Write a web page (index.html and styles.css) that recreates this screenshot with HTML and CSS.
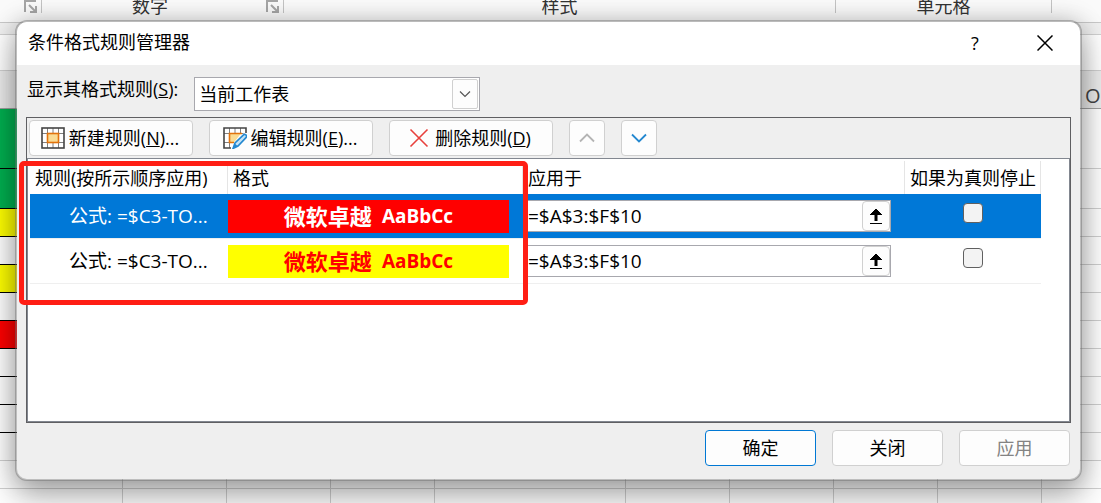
FILE: index.html
```html
<!DOCTYPE html>
<html lang="zh-CN">
<head>
    <meta charset="UTF-8">
    <meta name="viewport" content="width=device-width, initial-scale=1.0">
    <title>条件格式规则管理器</title>
    <link rel="stylesheet" href="styles.css">
</head>
<body>
    <!-- Workbook behind the dialog -->
    <div class="workbook">
        <div class="ribbon">
            <div class="group group-edge">
                <svg class="launcher" viewBox="0 0 13 13"><path d="M1 12V1h11M5 5l6 6M12 6v6H6" /></svg>
            </div>
            <div class="group group-number">
                <span class="group-label">数字</span>
                <svg class="launcher" viewBox="0 0 13 13"><path d="M1 12V1h11M5 5l6 6M12 6v6H6" /></svg>
            </div>
            <div class="group group-style"><span class="group-label">样式</span></div>
            <div class="group group-cells"><span class="group-label">单元格</span></div>
        </div>
        <div class="ribbon-gap"></div>
        <div class="formula-bar"></div>
        <div class="column-header"><span>O</span></div>
        <div class="sheet">
            <div class="row row-title"><div class="cell green"></div></div>
            <div class="row row-head"><div class="cell green"></div></div>
            <div class="row"><div class="cell yellow"></div></div>
            <div class="row"><div class="cell"></div></div>
            <div class="row"><div class="cell yellow"></div></div>
            <div class="row"><div class="cell"></div></div>
            <div class="row"><div class="cell red"></div></div>
            <div class="row"><div class="cell"></div></div>
            <div class="row"><div class="cell"></div></div>
            <div class="row"><div class="cell"></div></div>
            <div class="row"></div>
            <div class="row"></div>
            <div class="row"></div>
        </div>
    </div>

    <div class="dialog" role="dialog" aria-labelledby="dialog-title">
        <div class="title-bar">
            <h1 id="dialog-title">条件格式规则管理器</h1>
            <button class="title-btn" type="button">?</button>
            <button class="title-btn" type="button" aria-label="关闭">
                <svg width="16" height="16" viewBox="0 0 16 16"><path d="M.5.5l15 15M15.5.5l-15 15" fill="none" stroke="#000" stroke-width="1.5" /></svg>
            </button>
        </div>

        <div class="content">
            <div class="scope">
                <label for="scope">显示其格式规则(<u>S</u>):</label>
                <div class="select-box">
                    <select id="scope">
                        <option>当前工作表</option>
                    </select>
                    <span class="select-arrow">
                        <svg width="12" height="7" viewBox="0 0 12 7"><path d="M1 .5l5 5 5-5" fill="none" stroke="#555" stroke-width="1.2" /></svg>
                    </span>
                </div>
            </div>

            <div class="panel">
                <div class="toolbar">
                    <button class="btn tool-btn" type="button">
                        <svg width="24" height="22" viewBox="0 0 24 22">
                            <rect x="1" y="1" width="22" height="20" fill="#fff" />
                            <path d="M6.500 1v20M17.500 1v20M1 6.500h22M1 15.500h22M12 1v5M12 16v5" fill="none" stroke="#808080" />
                            <rect x="1" y="1" width="22" height="20" fill="none" stroke="#444" stroke-width="1.600" />
                            <rect x="6.500" y="6.500" width="11" height="9" fill="#fadc94" stroke="#e3730b" stroke-width="1.600" />
                        </svg>
                        <span>新建规则(<u>N</u>)...</span>
                    </button>
                    <button class="btn tool-btn" type="button">
                        <svg width="24" height="22" viewBox="0 0 24 22">
                            <path d="M1 1h22v5L9 21H1z" fill="#fff" />
                            <path d="M6.500 1v20M12 1v5M17.500 1v5M1 6.500h21M1 15.500h8" fill="none" stroke="#808080" />
                            <path d="M23 6V1H1v20h7" fill="none" stroke="#444" stroke-width="1.600" />
                            <path d="M18 6.500H6.500v9H11z" fill="#fadc94" />
                            <path d="M19 6.500H6.500v9H11" fill="none" stroke="#e3730b" stroke-width="1.600" />
                            <path d="M10 21.500l2-5.500L20.500 7.800c1.500-1.300 4 .8 2.700 2.600L15 19z" fill="#fff" stroke="#fff" stroke-width="2" />
                            <path d="M10 21.500l2-5.500L20.500 7.800c1.500-1.300 4 .8 2.700 2.600L15 19z" fill="#c5e3f6" stroke="#2488d0" stroke-width="1.600" />
                            <path d="M10 21.500l1.800-5 3 2.800z" fill="#2488d0" />
                        </svg>
                        <span>编辑规则(<u>E</u>)...</span>
                    </button>
                    <button class="btn tool-btn" type="button">
                        <svg class="icon-delete" width="20" height="20" viewBox="0 0 20 20"><path d="M1.500 1.500l17 17M18.500 1.500l-17 17" fill="none" stroke="#e8403c" stroke-width="1.600" /></svg>
                        <span>删除规则(<u>D</u>)</span>
                    </button>
                    <button class="btn move-btn" type="button" aria-label="上移" disabled>
                        <svg width="16" height="10" viewBox="0 0 16 10"><path d="M1 8.500l7-7 7 7" fill="none" stroke="#b4b4b4" stroke-width="1.800" /></svg>
                    </button>
                    <button class="btn move-btn" type="button" aria-label="下移">
                        <svg width="16" height="10" viewBox="0 0 16 10"><path d="M1 1.500l7 7 7-7" fill="none" stroke="#2488d0" stroke-width="1.800" /></svg>
                    </button>
                </div>

                <div class="list">
                    <table class="rules">
                        <colgroup>
                            <col class="col-rule">
                            <col class="col-format">
                            <col class="col-range">
                            <col class="col-stop">
                        </colgroup>
                        <thead>
                            <tr>
                                <th>规则(按所示顺序应用)</th>
                                <th>格式</th>
                                <th>应用于</th>
                                <th>如果为真则停止</th>
                            </tr>
                        </thead>
                        <tbody>
                            <tr class="selected">
                                <td class="rule-name">公式: =$C3-TO...</td>
                                <td><div class="preview preview-red"><span>微软卓越</span><span class="latin">AaBbCc</span></div></td>
                                <td>
                                    <div class="range">
                                        <input type="text" value="=$A$3:$F$10" aria-label="应用于">
                                        <button class="range-btn" type="button" aria-label="选择区域">
                                            <svg width="12" height="15" viewBox="0 0 12 15"><path d="M5 0h2v1h1v1h1v1h1v1h1v1h1v1H7.500v6h-3V6H0V5h1V4h1V3h1V2h1V1h1zM0 14h12v1H0z" /></svg>
                                        </button>
                                    </div>
                                </td>
                                <td class="stop"><input type="checkbox" aria-label="如果为真则停止"></td>
                            </tr>
                            <tr>
                                <td class="rule-name">公式: =$C3-TO...</td>
                                <td><div class="preview preview-yellow"><span>微软卓越</span><span class="latin">AaBbCc</span></div></td>
                                <td>
                                    <div class="range">
                                        <input type="text" value="=$A$3:$F$10" aria-label="应用于">
                                        <button class="range-btn" type="button" aria-label="选择区域">
                                            <svg width="12" height="15" viewBox="0 0 12 15"><path d="M5 0h2v1h1v1h1v1h1v1h1v1h1v1H7.500v6h-3V6H0V5h1V4h1V3h1V2h1V1h1zM0 14h12v1H0z" /></svg>
                                        </button>
                                    </div>
                                </td>
                                <td class="stop"><input type="checkbox" aria-label="如果为真则停止"></td>
                            </tr>
                        </tbody>
                    </table>
                    <div class="highlight"></div>
                </div>
            </div>

            <div class="actions">
                <button class="btn action-btn primary" type="button">确定</button>
                <button class="btn action-btn" type="button">关闭</button>
                <button class="btn action-btn" type="button" disabled>应用</button>
            </div>
        </div>
    </div>
</body>
</html>
```
FILE: styles.css
```css
* {
    margin: 0;
    padding: 0;
    box-sizing: border-box;
}

:root {
    --text: #000;
    --dialog-bg: #efefef;
    --surface: #fdfdfd;
    --border: #d0d0d0;
    --accent: #0078d4;
    --grid-line: #d0d0d0;
}

body {
    position: relative;
    min-height: 100vh;
    overflow: hidden;
    font-family: "Open Sans", "Noto Sans CJK SC", sans-serif;
    font-size: 18px;
    line-height: 24px;
    color: var(--text);
}

button,
input,
select {
    font: inherit;
    color: inherit;
}

svg {
    display: block;
    flex: none;
}

/* Workbook */
.workbook {
    height: 100vh;
    overflow: hidden;
    display: flex;
    flex-direction: column;
    background: #f3f3f3;
}

.ribbon {
    flex: none;
    display: flex;
    height: 23px;
    border-bottom: 1px solid #c8c8c8;
    background: #fafafa;
    color: #333;
}

.group {
    display: flex;
    justify-content: flex-end;
    height: 13px;
    border-right: 1px solid #c4c4c4;
}

.group-edge {
    width: 42px;
}

.group-number {
    width: 242px;
}

.group-style {
    flex: 1;
}

.group-cells {
    width: 216px;
    margin-right: 49px;
}

.group-label {
    flex: 1;
    line-height: 12px;
    text-align: center;
}

.launcher {
    width: 13px;
    height: 13px;
    margin: 0 4px 0 8px;
    fill: none;
    stroke: #a6a6a6;
    stroke-width: 2;
}

.ribbon-gap {
    flex: none;
    height: 12px;
    border-bottom: 1px solid #d0d0d0;
    background: #f0f0f0;
}

.formula-bar {
    flex: none;
    height: 36px;
    border-bottom: 1px solid #d0d0d0;
    background: #fff;
}

.column-header {
    flex: none;
    height: 38px;
    padding: 13px 0 0 1085px;
    border-bottom: 1px solid #a0a0a0;
    background: #ececec;
    color: #444;
    font-size: 20px;
}

.sheet {
    background-color: #fff;
    background-image:
        linear-gradient(to right, transparent 122px, var(--grid-line) 122px, var(--grid-line) 123px, transparent 123px),
        linear-gradient(to right, transparent 226px, var(--grid-line) 226px, var(--grid-line) 227px, transparent 227px),
        linear-gradient(to right, transparent 330px, var(--grid-line) 330px, var(--grid-line) 331px, transparent 331px),
        linear-gradient(to right, transparent 434px, var(--grid-line) 434px, var(--grid-line) 435px, transparent 435px),
        linear-gradient(to right, transparent 625px, var(--grid-line) 625px, var(--grid-line) 626px, transparent 626px),
        linear-gradient(to right, transparent 729px, var(--grid-line) 729px, var(--grid-line) 730px, transparent 730px),
        linear-gradient(to right, transparent 833px, var(--grid-line) 833px, var(--grid-line) 834px, transparent 834px),
        linear-gradient(to right, transparent 937px, var(--grid-line) 937px, var(--grid-line) 938px, transparent 938px),
        linear-gradient(to right, transparent 1041px, var(--grid-line) 1041px, var(--grid-line) 1042px, transparent 1042px);
}

.row {
    height: 28px;
    box-shadow: inset 0 -1px var(--grid-line);
}

.row-title {
    height: 60px;
}

.row-head {
    height: 40px;
}

.cell {
    width: 122px;
    height: 100%;
    border-bottom: 1px solid #000;
}

.green {
    background: #00b050;
}

.yellow {
    background: #ff0;
}

.red {
    background: #f00;
}

/* Dialog window */
.dialog {
    position: absolute;
    top: 20px;
    left: 15px;
    right: 19px;
    border: 2px solid rgba(110, 110, 110, 0.45);
    border-radius: 12px;
    background: var(--dialog-bg);
    background-clip: padding-box;
    box-shadow: 0 16px 32px rgba(0, 0, 0, 0.3), 0 0 24px rgba(0, 0, 0, 0.2);
}

.title-bar {
    display: flex;
    align-items: center;
    height: 43px;
    padding-left: 11px;
    border-radius: 10px 10px 0 0;
    background: #fff;
}

.title-bar h1 {
    flex: 1;
    padding-bottom: 3px;
    font-size: 18px;
    font-weight: 400;
}

.title-btn {
    display: flex;
    align-items: center;
    justify-content: center;
    width: 70px;
    height: 40px;
    padding-bottom: 2px;
    border: none;
    background: none;
}

.content {
    padding: 12px 9px;
}

.scope {
    display: flex;
    align-items: flex-start;
    gap: 16px;
    padding-left: 1px;
}

.select-box {
    position: relative;
    width: 286px;
}

.select-box select {
    display: block;
    width: 100%;
    height: 34px;
    padding: 0 32px 0 4px;
    appearance: none;
    border: 1px solid #a8a8ae;
    border-radius: 0;
    background: #fff;
}

.select-arrow {
    position: absolute;
    top: 2px;
    right: 2px;
    display: flex;
    align-items: center;
    justify-content: center;
    width: 26px;
    height: 30px;
    border: 1px solid var(--border);
    border-radius: 2px;
    background: var(--surface);
    pointer-events: none;
}

.btn {
    display: flex;
    align-items: center;
    justify-content: center;
    height: 36px;
    border: 1px solid var(--border);
    border-radius: 4px;
    background: var(--surface);
    white-space: nowrap;
}

.btn:disabled {
    color: #838383;
}

.panel {
    margin-top: 6px;
    border: 1px solid #5f5f62;
}

.toolbar {
    display: flex;
    gap: 16px;
    padding: 2px;
}

.tool-btn {
    gap: 4px;
    width: 164px;
    padding-right: 2px;
}

.icon-delete {
    margin-right: 2px;
}

.move-btn {
    width: 36px;
}

/* Rule list */
.list {
    position: relative;
    min-height: 264px;
    padding: 2px 28px 0 2px;
    border: 1px solid #828790;
    background: #fff;
}

.rules {
    width: 100%;
    table-layout: fixed;
    border-collapse: separate;
    border-spacing: 0;
}

.col-rule {
    width: 198px;
}

.col-format {
    width: 295px;
}

.col-stop {
    width: 136px;
}

.rules th {
    height: 33px;
    padding-left: 5px;
    border-right: 1px solid #e5e5e5;
    font-weight: 400;
    text-align: left;
    white-space: nowrap;
}

.rules td {
    height: 45px;
    border-bottom: 1px solid #efefef;
    vertical-align: middle;
}

.rules .selected td {
    background: #0078d7;
    background-clip: padding-box;
}

.rules .rule-name {
    padding-left: 39px;
    font-size: 19px;
    white-space: nowrap;
}

.selected .rule-name {
    color: #fff;
}

.preview {
    display: flex;
    align-items: center;
    justify-content: center;
    gap: 10px;
    height: 33px;
    margin-right: 14px;
    font-size: 22px;
    font-weight: 700;
}

.preview .latin {
    font-size: 19px;
}

.preview-red {
    background: #f00;
    color: #fff;
}

.preview-yellow {
    background: #ff0;
    color: #f00;
}

.range {
    display: flex;
    height: 32px;
    margin-right: 14px;
    border: 1px solid #a8a8ae;
    background: #fff;
    font-size: 19px;
}

.range input {
    flex: 1;
    min-width: 0;
    padding-left: 4px;
    border: none;
    background: none;
}

.range-btn {
    display: flex;
    align-items: center;
    justify-content: center;
    width: 28px;
    border: 1px solid var(--border);
    border-radius: 4px;
    background: var(--surface);
}

.rules .stop {
    padding-top: 9px;
    text-align: center;
    vertical-align: top;
}

.stop input {
    display: block;
    width: 20px;
    height: 20px;
    margin: 0 auto;
    appearance: none;
    border: 1px solid #606060;
    border-radius: 4px;
    background: #f3f3f3;
}

/* Marker frame around the rule and format columns */
.highlight {
    position: absolute;
    top: 2px;
    left: -9px;
    width: 509px;
    height: 144px;
    border: 5px solid #ff1e14;
    border-radius: 5px;
    pointer-events: none;
}

.actions {
    display: flex;
    justify-content: flex-end;
    gap: 16px;
    padding: 7px 1px 1px 0;
}

.action-btn {
    width: 111px;
}

.primary {
    border-color: var(--accent);
}
```
